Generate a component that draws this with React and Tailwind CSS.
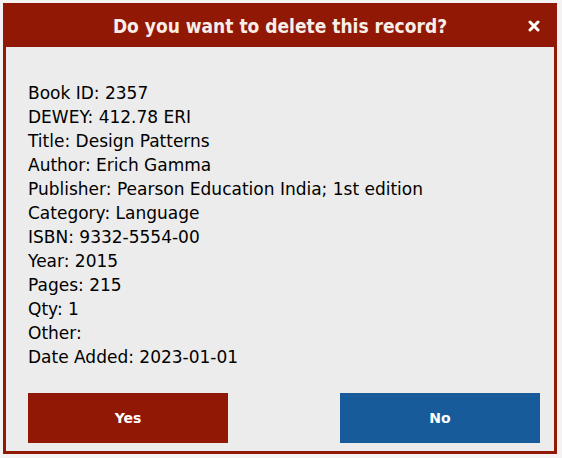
import React from "react";

const fields = [
  ["Book ID", "2357"],
  ["DEWEY", "412.78 ERI"],
  ["Title", "Design Patterns"],
  ["Author", "Erich Gamma"],
  ["Publisher", "Pearson Education India; 1st edition"],
  ["Category", "Language"],
  ["ISBN", "9332-5554-00"],
  ["Year", "2015"],
  ["Pages", "215"],
  ["Qty", "1"],
  ["Other", ""],
  ["Date Added", "2023-01-01"],
];

export default function App() {
  return (
    <div className="w-[562px] h-[458px] bg-[#f4f2f2] p-[3px] font-['DejaVu_Sans',sans-serif]">
      <div className="w-[554px] h-[451px] border-[3px] border-[#921806] bg-[#ececec] flex flex-col">
        {/* header */}
        <div className="h-[41px] bg-[#921806] flex items-center justify-center relative shrink-0">
          <h2 className="text-[19px] font-bold text-[#f7eee8] font-['DejaVu_Sans_Condensed','DejaVu_Sans',sans-serif] [font-stretch:condensed]">
            Do you want to delete this record?
          </h2>
          <svg className="absolute right-[14px] top-[14px]" width="12" height="12" viewBox="0 0 12 12">
            <path d="M2 2 L10 10 M10 2 L2 10" stroke="white" strokeWidth="3" strokeLinecap="round" />
          </svg>
        </div>

        {/* record details */}
        <div className="flex-1 pl-[22px] pr-[14px] pt-[34px] text-[17px] leading-[24px] text-black">
          {fields.map(([label, value]) => (
            <p key={label}>
              {label}: {value}
            </p>
          ))}
        </div>

        {/* actions */}
        <div className="flex justify-between pl-[22px] pr-[14px] pb-[8px]">
          <button className="w-[200px] h-[50px] bg-[#921806] text-white text-[14px] font-bold">Yes</button>
          <button className="w-[200px] h-[50px] bg-[#175b9b] text-white text-[14px] font-bold">No</button>
        </div>
      </div>
    </div>
  );
}
